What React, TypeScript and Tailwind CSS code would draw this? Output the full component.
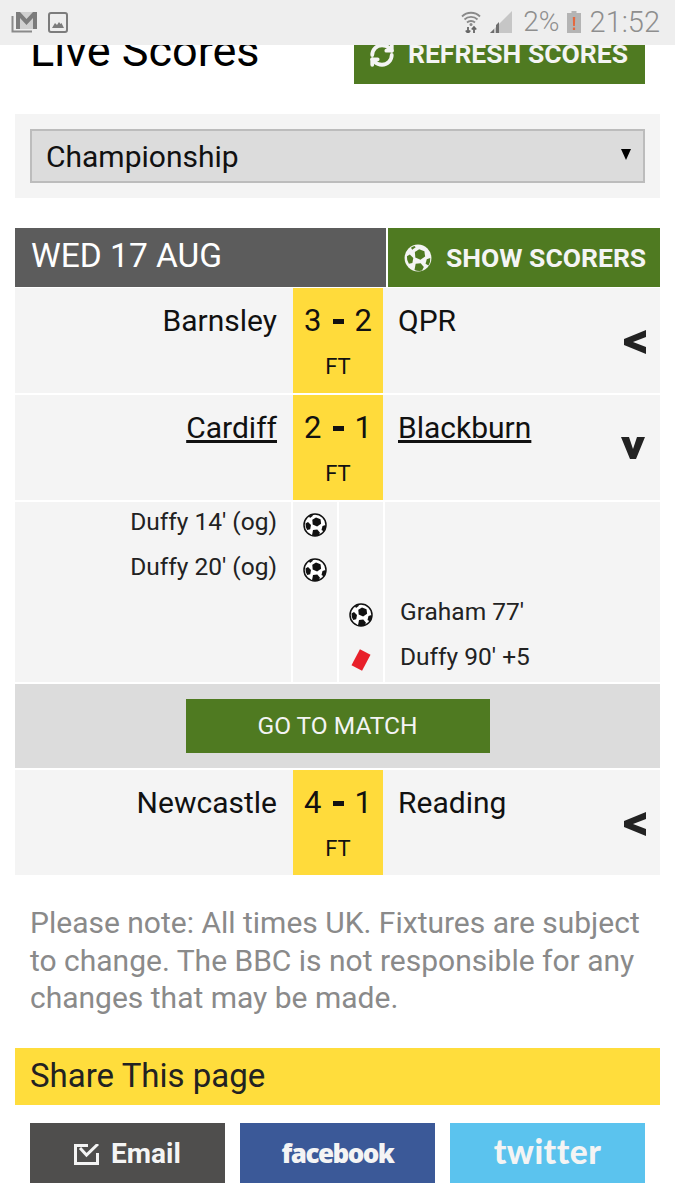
import { RefreshCw } from "lucide-react";

function Ball({ className }: { className: string }) {
  return (
    <svg viewBox="0 0 24 24" className={className}>
      <circle cx="12" cy="12" r="11" fill="#fff" stroke="#111" strokeWidth="1.500" />
      <path d="M13 4.500l4.500 1.700.6 4.600-4 2.700-4.400-2-.4-4.700z" fill="#111" />
      <path d="M2.500 10.500l2.500-1.500 3 3-.8 4.200-3 .8A10.500 10.500 0 0 1 2.500 10.500z" fill="#111" />
      <path d="M10 17l4.300-.6 2.700 3.400-1.500 3a10.500 10.500 0 0 1-6.500-.6z" fill="#111" />
      <path d="M19.500 13l3-1a10.500 10.500 0 0 1-1.500 6.500l-2.500-1.500z" fill="#111" />
      <path d="M6 3.200a10.500 10.500 0 0 1 3-1.500l1 1-3 2.300z" fill="#111" />
    </svg>
  );
}

function WhiteBall() {
  return (
    <svg viewBox="0 0 24 24" className="h-[28px] w-[28px]">
      <circle cx="12" cy="12" r="11.500" fill="#f4f4f4" />
      <path d="M13 4.500l4.500 1.700.6 4.600-4 2.700-4.400-2-.4-4.700z" fill="#4f7a21" />
      <path d="M2.500 10.500l2.500-1.500 3 3-.8 4.200-3 .8A10.500 10.500 0 0 1 2.500 10.500z" fill="#4f7a21" />
      <path d="M10 17l4.300-.6 2.700 3.400-1.500 3a10.500 10.500 0 0 1-6.500-.6z" fill="#4f7a21" />
      <path d="M19.500 13l3-1a10.500 10.500 0 0 1-1.500 6.500l-2.500-1.500z" fill="#4f7a21" />
      <path d="M6 3.200a10.500 10.500 0 0 1 3-1.500l1 1-3 2.300z" fill="#4f7a21" />
    </svg>
  );
}

function Chevron({ down }: { down?: boolean }) {
  return (
    <svg viewBox="0 0 24 24" className="h-[24px] w-[24px]">
      <path
        d={down ? "M0 1h8l4 12 4-12h8l-9 22h-6z" : "M23 0v7L10 12l13 5v7L1 15V9z"}
        fill="#222"
      />
    </svg>
  );
}

function MatchRow({
  home,
  score,
  away,
  open,
  link,
  rowClass,
}: {
  home: string;
  score: [string, string];
  away: string;
  open?: boolean;
  link?: boolean;
  rowClass: string;
}) {
  return (
    <div className={`flex h-[105px] bg-[#f4f4f4] ${rowClass}`}>
      <div className={`w-[262px] pt-[13px] text-right text-[30px] leading-[40px] text-[#111] ${link ? "underline" : ""}`}>
        {home}
      </div>
      <div className="ml-[16px] flex w-[90px] flex-col items-center bg-[#ffdb3b] pt-[13px] text-[#111]">
        <div className="flex items-center text-[31px] leading-[40px]">
          <span>{score[0]}</span>
          <span className="mx-[11px] h-[5px] w-[11px] bg-[#111]" />
          <span>{score[1]}</span>
        </div>
        <div className="mt-[11px] text-[22px] leading-[30px]">FT</div>
      </div>
      <div className={`flex-1 pl-[15px] pt-[13px] text-[30px] leading-[40px] text-[#111] ${link ? "underline" : ""}`}>
        {away}
      </div>
      <div className={`self-start ${open ? "mr-[15px] mt-[41px]" : "mr-[13px] mt-[42px]"}`}>
        <Chevron down={open} />
      </div>
    </div>
  );
}

function EventRow({
  left,
  right,
  leftBall,
  rightBall,
  card,
}: {
  left?: string;
  right?: string;
  leftBall?: boolean;
  rightBall?: boolean;
  card?: boolean;
}) {
  return (
    <div className="flex h-[45px] items-stretch text-[24.500px] text-[#222]">
      <div className="flex w-[262px] items-center justify-end pb-[4px]">{left}</div>
      <div className="ml-[14px] flex w-[48px] items-center justify-center border-l-2 border-r-2 border-white">
        {leftBall && <Ball className="h-[24px] w-[24px]" />}
      </div>
      <div className="flex w-[46px] items-center justify-center border-r-2 border-white">
        {rightBall && <Ball className="h-[24px] w-[24px]" />}
        {card && <span className="h-[18px] w-[12px] rotate-[28deg] bg-[#e8202a]" />}
      </div>
      <div className="flex flex-1 items-center pb-[4px] pl-[15px]">{right}</div>
    </div>
  );
}

export default function App() {
  return (
    <div className="min-h-[1200px] overflow-hidden bg-white font-['Roboto',sans-serif]">
      <div className="flex h-[45px] items-center justify-between bg-[#eeeeee] pb-[1px] pl-[11px] pr-[15px] text-[#8e8e8e]">
        <div className="flex items-center gap-[11px]">
          <svg viewBox="0 0 26 21" className="h-[21px] w-[26px]">
            <path d="M1.500 4v15.500H21" fill="none" stroke="#8a8a8a" strokeWidth="2" />
            <rect x="5" y="0" width="21" height="17" fill="#d0d0d0" />
            <path d="M5 0h4l6.500 7L22 0h4v17h-4V6l-6.500 7L9 6v11H5z" fill="#7c7c7c" />
          </svg>
          <svg viewBox="0 0 20 21" className="h-[21px] w-[20px]">
            <rect x="1" y="1" width="18" height="19" rx="2" fill="none" stroke="#7c7c7c" strokeWidth="2" />
            <path d="M4 16l3-5 2 2 2-3 1.500 2 1-1 2.500 5z" fill="#7c7c7c" />
          </svg>
        </div>
        <div className="flex items-center">
          <svg viewBox="0 0 20 22" className="h-[22px] w-[20px]">
            <path d="M1 5.500c5-5 13-5 18 0M3.500 8.500c3.500-3.500 9.500-3.500 13 0M6 11.500c2.200-2 5.800-2 8 0" fill="none" stroke="#8a8a8a" strokeWidth="1.800" />
            <circle cx="10" cy="13.500" r="1.500" fill="#8a8a8a" />
            <path d="M7 16v6M4.800 19.500L7 22l2.200-2.500M13 22v-6M10.800 18.500L13 16l2.200 2.500" fill="none" stroke="#666" strokeWidth="1.800" />
          </svg>
          <svg viewBox="0 0 23 22" className="ml-[8px] h-[22px] w-[23px]">
            <path d="M23 0v22H1z" fill="#c6c6c6" />
            <path d="M1 22l4-4v4zM7 22v-8l3-3v11z" fill="#6e6e6e" />
          </svg>
          <span className="ml-[11px] text-[28px] font-light leading-none">2%</span>
          <svg viewBox="0 0 14 22" className="ml-[7px] h-[22px] w-[14px]">
            <path d="M4.500 0h5v2H14v20H0V2h4.500z" fill="#b4b4b4" />
            <path d="M5.800 6h2.400l-.3 9H6.100zM5.900 16.500h2.200v2.500H5.900z" fill="#e4683f" />
          </svg>
          <span className="ml-[9px] text-[29px] font-light leading-none">21:52</span>
        </div>
      </div>

      <div className="flex h-[39px] justify-between overflow-hidden px-[30px]">
        <h1 className="-mt-[20px] text-[45px] font-normal leading-[52px] text-black">Live Scores</h1>
        <div className="flex h-[39px] w-[291px] items-start justify-center bg-[#4f7a21] pr-[2px] text-[26.500px] font-bold leading-[20px] text-[#f4f4f4]">
          <RefreshCw className="mr-[13px] h-[26px] w-[26px] -translate-y-[3px]" strokeWidth={3.500} />
          <span className="-mt-[1px]">REFRESH SCORES</span>
        </div>
      </div>

      <div className="mx-[15px] mt-[30px] bg-[#f4f4f4] p-[15px]">
        <div className="flex h-[54px] items-center justify-between border-2 border-[#bcbcbc] bg-[#dcdcdc] pl-[14px] pr-[12px] text-[30px] text-[#111]">
          <span>Championship</span>
          <span className="-mt-[4px] h-0 w-0 border-l-[5px] border-r-[5px] border-t-[11px] border-l-transparent border-r-transparent border-t-black" />
        </div>
      </div>

      <div className="mx-[15px] mt-[30px]">
        <div className="flex h-[59px]">
          <div className="flex w-[371px] items-center bg-[#5c5c5c] pb-[3px] pl-[16px] text-[33.500px] text-white">WED 17 AUG</div>
          <div className="ml-[2px] flex flex-1 items-center bg-[#4f7a21] pl-[16px] text-[26.500px] font-bold text-[#f4f4f4]">
            <WhiteBall />
            <span className="ml-[14px] whitespace-nowrap">SHOW SCORERS</span>
          </div>
        </div>
        <MatchRow home="Barnsley" score={["3", "2"]} away="QPR" rowClass="mt-[1px]" />
        <MatchRow home="Cardiff" score={["2", "1"]} away="Blackburn" open link rowClass="mt-[2px]" />
        <div className="mt-[2px] bg-[#f4f4f4]">
          <EventRow left="Duffy 14' (og)" leftBall />
          <EventRow left="Duffy 20' (og)" leftBall />
          <EventRow rightBall right="Graham 77'" />
          <EventRow card right="Duffy 90' +5" />
        </div>
        <div className="mt-[2px] flex h-[84px] items-center justify-center bg-[#dcdcdc]">
          <div className="flex h-[54px] w-[304px] items-center justify-center bg-[#4f7a21] text-[24.500px] text-[#f4f4f4]">
            GO TO MATCH
          </div>
        </div>
        <MatchRow home="Newcastle" score={["4", "1"]} away="Reading" rowClass="mt-[2px]" />
      </div>

      <p className="mx-[30px] mt-[29px] text-[30px] leading-[37.500px] text-[#8a8a8a]">
        Please note: All times UK. Fixtures are subject to change. The BBC is not responsible for any changes that may be made.
      </p>

      <div className="mx-[15px] mt-[31px] flex h-[57px] items-center bg-[#ffdd3c] pl-[15px] text-[33px] text-[#222]">
        Share This page
      </div>

      <div className="mx-[30px] mt-[18px] grid grid-cols-3 gap-[15px]">
        <div className="flex h-[60px] items-center justify-center bg-[#4f4e4d] pt-[3px] text-[28px] font-bold text-[#f4f4f4]">
          <svg viewBox="0 0 25 21" className="mr-[12px] h-[21px] w-[25px]">
            <path d="M14 1.500H1.500v18h22V9" fill="none" stroke="#f4f4f4" strokeWidth="3" />
            <path d="M6 4l6.500 7L24 0" fill="none" stroke="#f4f4f4" strokeWidth="3" />
          </svg>
          Email
        </div>
        <div className="flex h-[60px] items-center justify-center bg-[#3b5998] pt-[1px] font-['Open_Sans',sans-serif] text-[26px] font-extrabold tracking-[-1.500px] text-[#f4f4f4]">
          facebook
        </div>
        <div className="flex h-[60px] items-center justify-center bg-[#5bc3ee] pb-[2px] font-['Lato',sans-serif] text-[33.500px] font-black tracking-[0.500px] text-[#f4f4f4]">
          twitter
        </div>
      </div>
    </div>
  );
}
